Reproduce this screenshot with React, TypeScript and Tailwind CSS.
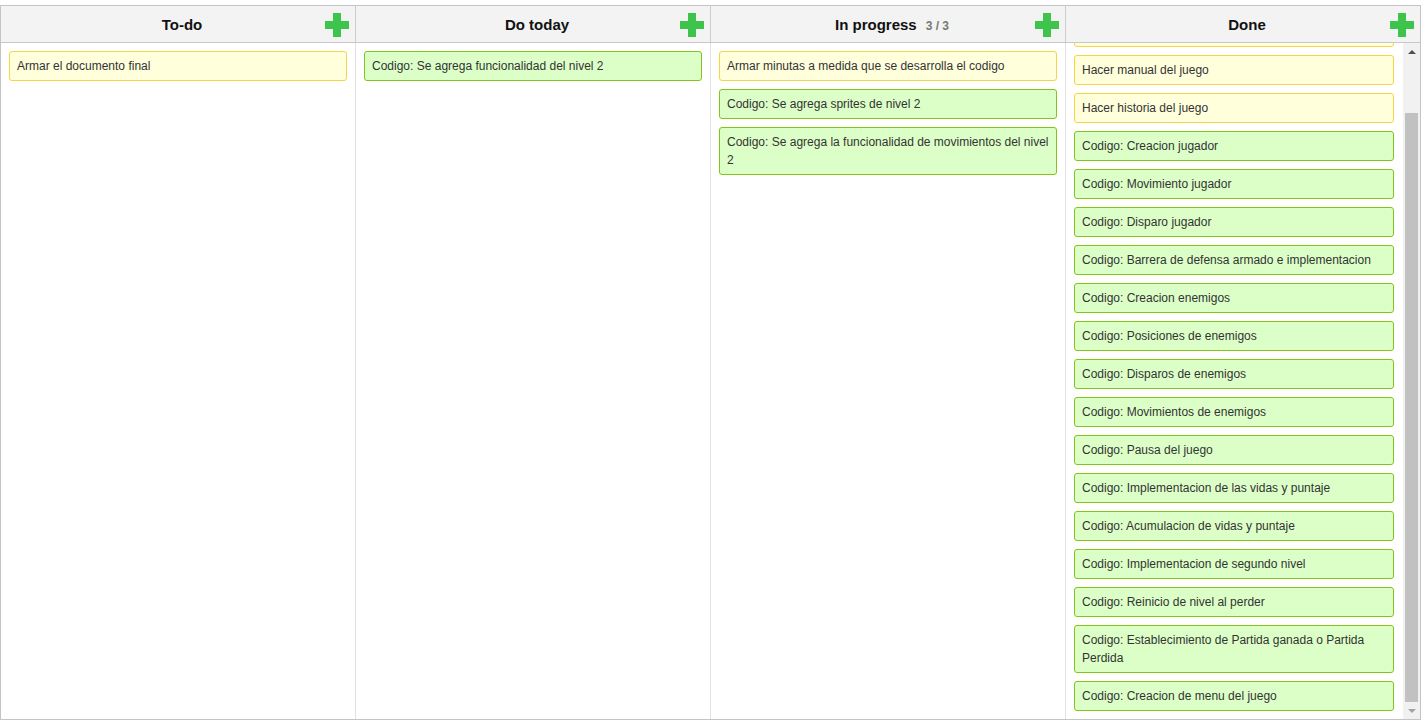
import React from "react";

type Card = { text: string; color: "y" | "g" };

const Y = (text: string): Card => ({ text, color: "y" });
const G = (text: string): Card => ({ text, color: "g" });

const columns: { title: string; count?: string; cards: Card[]; scroll?: boolean }[] = [
  { title: "To-do", cards: [Y("Armar el documento final")] },
  { title: "Do today", cards: [G("Codigo: Se agrega funcionalidad del nivel 2")] },
  {
    title: "In progress",
    count: "3 / 3",
    cards: [
      Y("Armar minutas a medida que se desarrolla el codigo"),
      G("Codigo: Se agrega sprites de nivel 2"),
      G("Codigo: Se agrega la funcionalidad de movimientos del nivel 2"),
    ],
  },
  {
    title: "Done",
    scroll: true,
    cards: [
      Y("Hacer documento de diseño"),
      Y("Hacer manual del juego"),
      Y("Hacer historia del juego"),
      G("Codigo: Creacion jugador"),
      G("Codigo: Movimiento jugador"),
      G("Codigo: Disparo jugador"),
      G("Codigo: Barrera de defensa armado e implementacion"),
      G("Codigo: Creacion enemigos"),
      G("Codigo: Posiciones de enemigos"),
      G("Codigo: Disparos de enemigos"),
      G("Codigo: Movimientos de enemigos"),
      G("Codigo: Pausa del juego"),
      G("Codigo: Implementacion de las vidas y puntaje"),
      G("Codigo: Acumulacion de vidas y puntaje"),
      G("Codigo: Implementacion de segundo nivel"),
      G("Codigo: Reinicio de nivel al perder"),
      G("Codigo: Establecimiento de Partida ganada o Partida Perdida"),
      G("Codigo: Creacion de menu del juego"),
    ],
  },
];

function Plus() {
  return (
    <svg width="24" height="24" viewBox="0 0 24 24" className="block">
      <rect x="8" y="0" width="8" height="24" fill="#3ec44c" />
      <rect x="0" y="8" width="24" height="8" fill="#3ec44c" />
    </svg>
  );
}

function CardView({ c }: { c: Card }) {
  return (
    <div
      className={
        "rounded-[3px] border px-[7px] py-[5px] text-[12px] leading-[18px] text-[#333333] " +
        (c.color === "y"
          ? "bg-[#ffffdc] border-[#f5d445]"
          : "bg-[#dcffc8] border-[#84c41a]")
      }
    >
      {c.text}
    </div>
  );
}

function Scrollbar() {
  return (
    <div className="flex w-[17px] shrink-0 flex-col bg-[#f1f1f1]">
      <div className="flex h-[17px] items-center justify-center">
        <div className="h-0 w-0 border-x-[4px] border-b-[4px] border-x-transparent border-b-[#505050]" />
      </div>
      <div className="flex flex-1 flex-col px-[2px] pt-[53px]">
        <div className="flex-1 bg-[#c1c1c1]" />
      </div>
      <div className="flex h-[17px] items-center justify-center">
        <div className="h-0 w-0 border-x-[4px] border-t-[4px] border-x-transparent border-t-[#a3a3a3]" />
      </div>
    </div>
  );
}

export default function App() {
  return (
    <div
      className="bg-white pt-[5px]"
      style={{ fontFamily: '"Liberation Sans", Arial, sans-serif' }}
    >
      <div className="flex h-[715px] w-[1421px] flex-col border border-[#c4c4c4]">
        <div className="flex h-[37px] shrink-0 border-b border-[#c8c8c8] bg-[#f3f3f3]">
          {columns.map((col, i) => (
            <div
              key={col.title}
              className={
                "flex items-center pl-[38px] pr-[6px] " +
                (i < 3 ? "w-[355px] border-r border-[#cccccc]" : "w-[354px] pr-[5px]")
              }
            >
              <div className="flex flex-1 items-baseline justify-center gap-[9px] pt-[2px]">
                <span className="text-[15px] font-bold text-[#111111]">{col.title}</span>
                {col.count && (
                  <span className="text-[12px] font-bold text-[#777777]">{col.count}</span>
                )}
              </div>
              <div className="pt-[2px]">
                <Plus />
              </div>
            </div>
          ))}
        </div>
        <div className="flex min-h-0 flex-1">
          {columns.map((col, i) => (
            <div
              key={col.title}
              className={
                "flex min-h-0 " +
                (i < 3 ? "w-[355px] border-r border-[#e2e2e2]" : "w-[354px]")
              }
            >
              <div className="min-h-0 flex-1 overflow-hidden">
                <div
                  className={
                    "flex flex-col gap-[8px] pl-[8px] " +
                    (col.scroll ? "mt-[-34px] pt-[8px] pr-[9px]" : "pt-[8px] pr-[8px]")
                  }
                >
                  {col.cards.map((c, j) => (
                    <CardView key={j} c={c} />
                  ))}
                </div>
              </div>
              {col.scroll && <Scrollbar />}
            </div>
          ))}
        </div>
      </div>
    </div>
  );
}
